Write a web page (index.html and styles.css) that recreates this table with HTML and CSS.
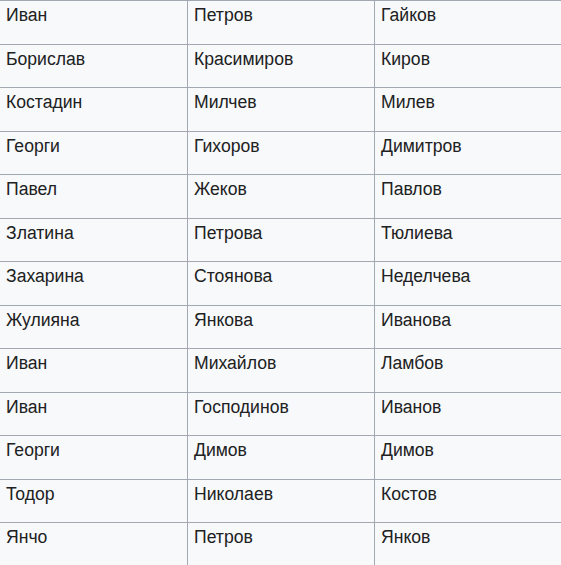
FILE: index.html
```html
<!DOCTYPE html>
<html lang="bg">
<head>
<meta charset="utf-8">
<link rel="stylesheet" href="styles.css">
</head>
<body>
<table class="names">
<colgroup><col class="c1"><col class="c2"><col class="c3"></colgroup>
<tbody>
<tr><td>Иван</td><td>Петров</td><td>Гайков</td></tr>
<tr><td>Борислав</td><td>Красимиров</td><td>Киров</td></tr>
<tr><td>Костадин</td><td>Милчев</td><td>Милев</td></tr>
<tr><td>Георги</td><td>Гихоров</td><td>Димитров</td></tr>
<tr><td>Павел</td><td>Жеков</td><td>Павлов</td></tr>
<tr><td>Златина</td><td>Петрова</td><td>Тюлиева</td></tr>
<tr><td>Захарина</td><td>Стоянова</td><td>Неделчева</td></tr>
<tr><td>Жулияна</td><td>Янкова</td><td>Иванова</td></tr>
<tr><td>Иван</td><td>Михайлов</td><td>Ламбов</td></tr>
<tr><td>Иван</td><td>Господинов</td><td>Иванов</td></tr>
<tr><td>Георги</td><td>Димов</td><td>Димов</td></tr>
<tr><td>Тодор</td><td>Николаев</td><td>Костов</td></tr>
<tr><td>Янчо</td><td>Петров</td><td>Янков</td></tr>
</tbody>
</table>
</body>
</html>
```
FILE: styles.css
```css
html, body {
  margin: 0;
  padding: 0;
  background: #ffffff;
  overflow: hidden;
}
.names {
  margin-left: -1px;
  width: 563px;
  table-layout: fixed;
  border-collapse: collapse;
  background: #f8f9fa;
  color: #202122;
  font-family: "Liberation Sans", Arial, sans-serif;
  font-size: 17.6px;
  line-height: 22px;
}
.c1 { width: 188px; }
.c2 { width: 187px; }
.c3 { width: 188px; }
.names td {
  border: 1px solid #a2a9b1;
  padding: 3px 6px 0;
  height: 39.5px;
  vertical-align: top;
  white-space: nowrap;
}
```
